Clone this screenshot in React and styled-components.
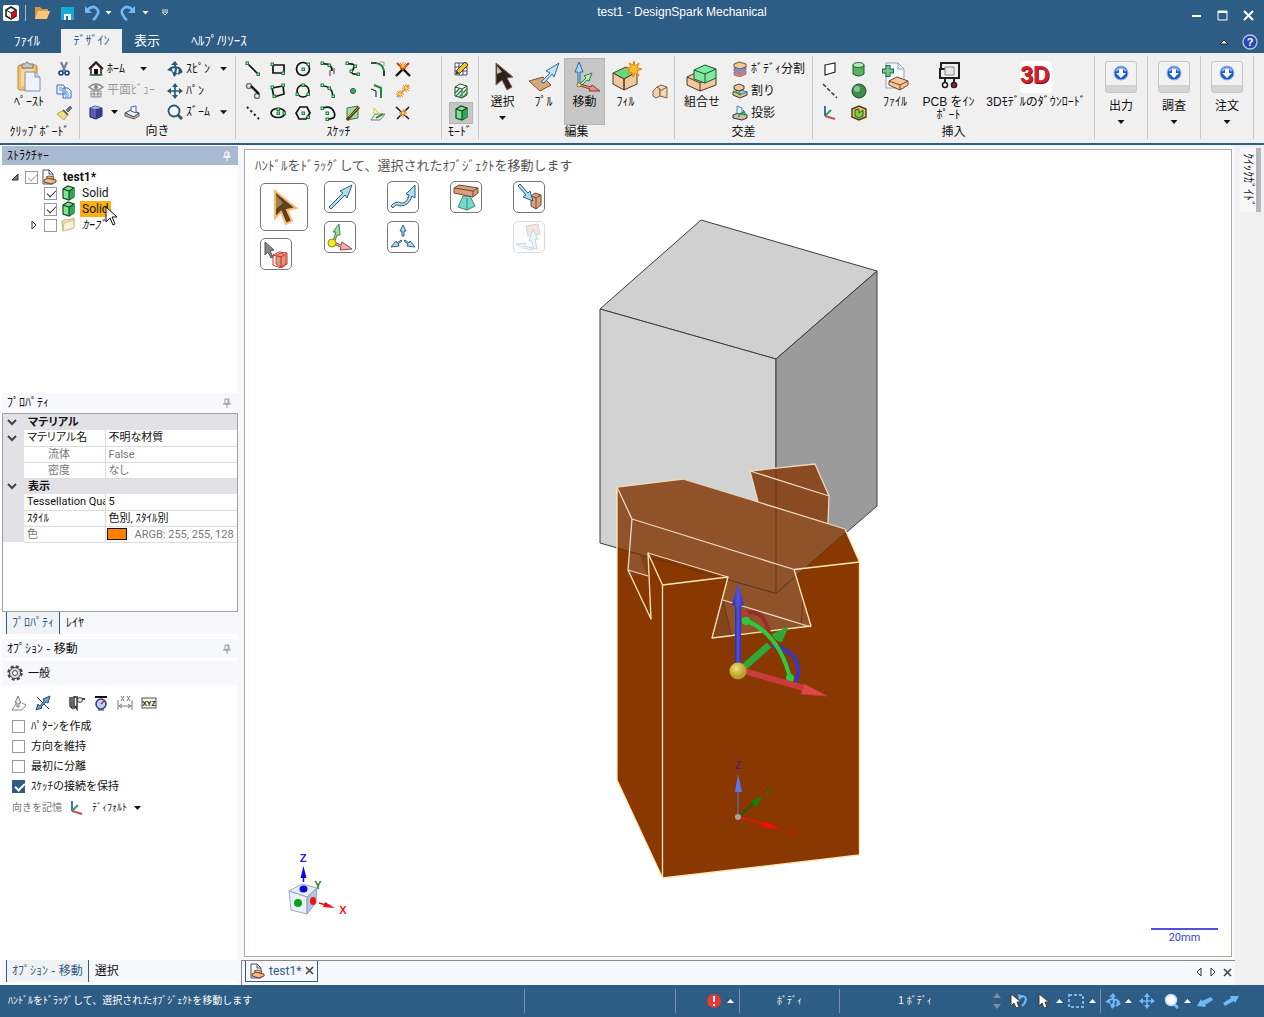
import React from "react";
import styled, { createGlobalStyle, css } from "styled-components";

const blue = "#2d5c85";
const node = "#15803d";

export default function App() {
  return (
    <>
      <GlobalStyle />
      <Window>
        <TitleBar />
        <TabBar />
        <Ribbon />
        <Body>
          <SidePane />
          <WorkArea />
          <QuickGuide>
            <GuideTab type="button">ｸｲｯｸｶﾞｲﾄﾞ</GuideTab>
          </QuickGuide>
        </Body>
        <StatusBar />
      </Window>
    </>
  );
}

/* ---------- title bar and tabs ---------- */

function TitleBar() {
  return (
    <TitleRow>
      <QuickTools>
        <Ico w={18} h={18} box="0 0 18 18">
          <rect x="1" y="1" width="16" height="16" rx="2" fill="#fff" />
          <path d="M4 6l5-3 5 3v6l-5 3-5-3z" fill="#fff" stroke="#222" strokeWidth="1.6" />
          <path d="M9 9l5-3v6l-5 3z" fill="#d0101c" />
          <path d="M4 6l5 3 5-3" fill="none" stroke="#222" />
        </Ico>
        <TitleSep />
        <IconButton aria-label="開く" $w={24}>
          <Ico>
            <path d="M1 14V2h5l2 2h6v3" fill="#d99b3a" />
            <path d="M1 14l3-8h12l-3 8z" fill="#f8c878" />
          </Ico>
        </IconButton>
        <IconButton aria-label="保存" $w={26}>
          <Ico>
            <path d="M2 2h13v13H2z" fill="#18a8d8" />
            <path d="M5 9h7v6H5z" fill="#fff" />
            <path d="M7 11h2v4H7z" fill="#2d6c95" />
          </Ico>
        </IconButton>
        <IconButton aria-label="元に戻す" $w={24}>
          <Undo />
        </IconButton>
        <TitleCaret $color="#fff" />
        <IconButton aria-label="やり直し" $w={26}>
          <Flip>
            <Undo />
          </Flip>
        </IconButton>
        <TitleCaret $color="#fff" />
        <MoreButton aria-label="カスタマイズ">
          <Ico w={8} h={8} box="0 0 8 8">
            <path d="M1 1h6M1 3l3 3 3-3z" stroke="#dde6ee" fill="none" />
          </Ico>
        </MoreButton>
      </QuickTools>
      <Title>test1 - DesignSpark Mechanical</Title>
      <WindowButtons>
        <IconButton aria-label="最小化" $w={26}>
          <Ico><path d="M4 9h9" stroke="#fff" strokeWidth="2" /></Ico>
        </IconButton>
        <IconButton aria-label="最大化" $w={26}>
          <Ico>
            <path d="M4 4h9v9H4z" fill="none" stroke="#fff" />
            <path d="M4 5h9" stroke="#fff" strokeWidth="2" />
          </Ico>
        </IconButton>
        <IconButton aria-label="閉じる" $w={26}>
          <Ico><path d="M4 4l9 9M13 4l-9 9" stroke="#fff" strokeWidth="2" /></Ico>
        </IconButton>
      </WindowButtons>
    </TitleRow>
  );
}

function TabBar() {
  return (
    <TabRow>
      <Tab $w={54}>ﾌｧｲﾙ</Tab>
      <Tab $w={61} $active>ﾃﾞｻﾞｲﾝ</Tab>
      <Tab $w={50}>表示</Tab>
      <Tab $w={94}>ﾍﾙﾌﾟ/ﾘｿｰｽ</Tab>
      <TabSpacer />
      <IconButton aria-label="リボンを折りたたむ" $w={24}>
        <Ico w={10} h={8} box="0 0 10 8">
          <path d="M1 6l4-4 4 4z" fill="#fff" stroke="#222" strokeWidth="1" />
        </Ico>
      </IconButton>
      <IconButton aria-label="ヘルプ" $w={28}>
        <Ico>
          <circle cx="8" cy="8" r="7" fill="#2848b0" stroke="#b8c4e0" strokeWidth="1.4" />
          <text x="8" y="12" textAnchor="middle" fontSize="11" fontWeight="700" fill="#fff">?</text>
        </Ico>
      </IconButton>
    </TabRow>
  );
}

/* ---------- ribbon ---------- */

function Ribbon() {
  return (
    <RibbonRow>
      <Group $w={80} $label="ｸﾘｯﾌﾟﾎﾞｰﾄﾞ">
        <BigButton $w={48} $left={5}>
          <PasteIcon />
          ﾍﾟｰｽﾄ
        </BigButton>
        <IconColumn $left={3}>
          <IconButton aria-label="切り取り">
            <Ico>
              <path d="M5 1l4 9M11 1L7 10" stroke="#6880a8" strokeWidth="2" />
              <circle cx="5" cy="12" r="2" fill="none" stroke="#183c80" strokeWidth="1.6" />
              <circle cx="11" cy="12" r="2" fill="none" stroke="#183c80" strokeWidth="1.6" />
            </Ico>
          </IconButton>
          <IconButton aria-label="コピー">
            <Ico>
              <path d="M1 2h6l2 2v7H1zM7 5h5l3 3v7H7z" fill="#e8f2ff" stroke="#3c70c0" />
              <path d="M3 5h3M3 7h3M9 9h3M9 11h4M9 13h4" stroke="#5c90d8" />
            </Ico>
          </IconButton>
          <IconButton aria-label="書式のコピー">
            <Ico>
              <path d="M10 5l4-4 2 2-4 4z" fill="#6878a8" stroke="#344" strokeWidth=".6" />
              <path d="M1 9l7-4 4 4-4 6z" fill="#f0e080" stroke="#a89030" strokeWidth=".8" />
              <path d="M7 5l5 5" stroke="#555" strokeWidth="1.5" />
            </Ico>
          </IconButton>
        </IconColumn>
      </Group>

      <Group $w={156} $label="向き">
        <IconColumn $left={8} $w={75}>
          <SmallButton $pad={16}>
            <Ico>
              <path d="M3 7v7h10V7L8 2z" fill="#fff" stroke="#18184c" strokeWidth="1.5" />
              <path d="M1 8l7-7 7 7" fill="none" stroke="#402010" strokeWidth="1.8" />
              <path d="M6 8h4v6H6z" fill="#111" />
              <path d="M1 14h14" stroke="#60a030" />
            </Ico>
            <span>ﾎｰﾑ</span>
            <Caret $push />
          </SmallButton>
          <SmallButton disabled>
            <Ico>
              <path d="M1 5q7-6 14 0q-7 6-14 0z" fill="none" stroke="#888" strokeWidth="1.5" />
              <circle cx="8" cy="5" r="2" fill="#888" />
              <path d="M3 9h10v6H3zM3 12h10M6 9v6M10 9v6" fill="none" stroke="#888" />
            </Ico>
            <span>平面ﾋﾞｭｰ</span>
          </SmallButton>
          <ButtonPair>
            <CubeButton aria-label="ビュー">
              <Ico>
                <path d="M2 4l5-2 7 2v8l-6 3-6-2z" fill="#5560b8" stroke="#18205c" />
                <path d="M2 4l6 1 6-1-7-2z" fill="#a8b0f0" />
                <path d="M8 5v10l6-3V4z" fill="#303c90" />
              </Ico>
              <Caret />
            </CubeButton>
            <IconButton aria-label="スケッチ平面">
              <Ico>
                <path d="M1 9l6-3 8 3-5 4z" fill="#e8f0f8" stroke="#345" />
                <path d="M1 9v3l9 3 5-3V9l-5 4z" fill="#e0b090" stroke="#345" strokeWidth=".8" />
                <path d="M7 3l5-1v7l-5-2z" fill="#f4f8ff" stroke="#3868b0" />
              </Ico>
            </IconButton>
          </ButtonPair>
        </IconColumn>
        <IconColumn $left={4} $w={64}>
          <SmallButton><SpinIcon color="#285878" /><span>ｽﾋﾟﾝ</span><Caret $push /></SmallButton>
          <SmallButton><PanIcon color="#285878" /><span>ﾊﾟﾝ</span></SmallButton>
          <SmallButton>
            <Ico>
              <circle cx="7" cy="7" r="5.5" fill="#eef6fb" stroke="#285878" strokeWidth="1.8" />
              <path d="M11 11l4 4" stroke="#285878" strokeWidth="3" />
            </Ico>
            <span>ｽﾞｰﾑ</span>
            <Caret $push />
          </SmallButton>
        </IconColumn>
      </Group>

      <Group $w={206} $label="ｽｹｯﾁ">
        <SketchGrid>
          {sketchTools.map(([name, drawing]) => (
            <IconButton key={name} aria-label={name}>
              <Ico>{drawing}</Ico>
            </IconButton>
          ))}
        </SketchGrid>
      </Group>

      <Group $w={37} $label="ﾓｰﾄﾞ">
        <IconColumn $left={7}>
          <IconButton aria-label="スケッチモード" $w={24}>
            <Ico>
              <path d="M2 2h12v12H2zM2 6h12M2 10h12M6 2v12M10 2v12" fill="#fff" stroke="#444c78" />
              <Pencil />
            </Ico>
          </IconButton>
          <IconButton aria-label="断面モード" $w={24}>
            <Ico>
              <path d="M2 4l5-3 7 2v9l-5 3-7-2z" fill="#fff" stroke="#184c28" />
              <path d="M2 4l7 2 5-3M9 6v9" fill="none" stroke="#184c28" />
              <path d="M2 10l5-5M3 13l6-6M6 14l3-3M10 10l4-4M10 14l4-4" stroke="#208840" strokeWidth="1.4" />
            </Ico>
          </IconButton>
          <IconButton aria-label="3Dモード" $w={24} $active><SolidIcon /></IconButton>
        </IconColumn>
      </Group>

      <Group $w={196} $label="編集">
        <BigButton $w={41} $left={3}>
          <Ico w={32} h={32} box="0 0 32 32">
            <path d="M9 2v22l6-5 5 10 5-3-5-9 6-1z" fill="#30201a" stroke="#806858" />
            <path d="M10 5v8l5-2z" fill="#c8c0bc" />
          </Ico>
          選択
          <Caret />
        </BigButton>
        <BigButton $w={41}>
          <Ico w={32} h={32} box="0 0 32 32">
            <path d="M1 20l14-4 8 8-11 6z" fill="#d8a878" stroke="#785030" />
            <path d="M13 21l9-9-4-2 13-8-5 14-2-3-8 9z" fill="#c0e4f8" stroke="#306890" />
          </Ico>
          ﾌﾟﾙ
        </BigButton>
        <BigButton $w={41} $active>
          <Ico w={32} h={32} box="0 0 32 32">
            <path d="M9 24V11H6l4-10 4 10h-3v13z" fill="#a8d8f0" stroke="#306890" />
            <path d="M11 23l6-6-2-2 8-3-3 8-2-1-6 6z" fill="#b8e8b8" stroke="#308040" />
            <path d="M11 23l11 3 1-2 8 6-11 0 1-2-10-3z" fill="#e89090" stroke="#903838" />
            <circle cx="10" cy="24" r="2" fill="#f8f080" stroke="#807820" />
          </Ico>
          移動
        </BigButton>
        <BigButton $w={41}>
          <Ico w={32} h={32} box="0 0 32 32">
            <path d="M3 12l13-6 11 5-13 7z" fill="#68d880" stroke="#404020" />
            <path d="M3 12v11l11 6V18zM14 18v11l13-6V11z" fill="#f0c8a0" stroke="#50381c" />
            <path d="M24 0l1 5 4-3-2 5 5 1-5 2 2 5-4-3-2 4-1-5-5 2 3-4-4-2 5-1-2-4 4 2z" fill="#ffc030" stroke="#e08010" />
          </Ico>
          ﾌｨﾙ
        </BigButton>
        <Centered $left={3}>
          <IconButton aria-label="オフセット" $w={22}>
            <Ico>
              <path d="M1 8l4-4 3 1v8l-4 2-3-2z" fill="#f0d0b0" stroke="#806040" />
              <path d="M5 4l4-2 6 2v11l-7-2V6z" fill="#f4d4b4" stroke="#806040" />
              <path d="M8 8l7-4" stroke="#806040" />
            </Ico>
          </IconButton>
        </Centered>
      </Group>

      <Group $w={138} $label="交差">
        <BigButton $w={46} $left={4}>
          <Ico w={32} h={32} box="0 0 32 32">
            <path d="M1 16l8-4 21 5v7l-16 6-13-6z" fill="#f0c8a0" stroke="#50381c" />
            <path d="M1 16l13 6v8M14 22l4-2" fill="none" stroke="#50381c" />
            <path d="M8 9l11-5 11 4v9l-11 5-11-4z" fill="#80e8a0" stroke="#145c28" />
            <path d="M8 9l11 4 11-5M19 13v9" fill="none" stroke="#145c28" />
          </Ico>
          組合せ
        </BigButton>
        <IconColumn $left={7} $w={76}>
          <SmallButton>
            <Ico>
              <path d="M2 7l6 2 6-3v3l-6 3-6-2z" fill="#8890d8" stroke="#505890" strokeWidth=".6" />
              <path d="M2 11l6 2 6-3v3l-6 3-6-2z" fill="#e08080" stroke="#904040" strokeWidth=".6" />
              <path d="M2 3l5-2 7 2v3l-6 2-6-2z" fill="#f0c8a0" stroke="#705030" />
            </Ico>
            <span>ﾎﾞﾃﾞｨ分割</span>
          </SmallButton>
          <SmallButton>
            <Ico>
              <path d="M1 9l6-2 8 2v3l-7 3-7-3z" fill="#e8c098" stroke="#50381c" />
              <path d="M9 7l6 2-4 2-5-1z" fill="#90c8e8" stroke="#3070a0" strokeWidth=".8" />
              <path d="M2 3l5-2 5 2v3l-5 2-5-2z" fill="#f0c8a0" stroke="#50381c" />
              <path d="M1 8l6 3 2 1" stroke="#30a040" fill="none" strokeWidth="1.6" />
            </Ico>
            <span>割り</span>
          </SmallButton>
          <SmallButton>
            <Ico>
              <path d="M1 10l5-2 9 2v3l-5 2-9-2z" fill="#e0b890" stroke="#203060" />
              <path d="M5 1l5 2v7L5 8z" fill="#d8f0ff" stroke="#4888c0" />
              <path d="M7 12V9l6-2M11 5l3 5" stroke="#209838" fill="none" strokeWidth="1.4" />
            </Ico>
            <span>投影</span>
          </SmallButton>
        </IconColumn>
      </Group>

      <Group $w={282} $label="挿入">
        <InsertGrid>
          <IconButton aria-label="平面">
            <Ico><path d="M3 4l10-2v9L3 14z" fill="#fff" stroke="#222" strokeWidth="1.2" /></Ico>
          </IconButton>
          <IconButton aria-label="円柱">
            <Ico>
              <path d="M2 4v9q6 4 11 0V4z" fill="#58b068" stroke="#185c28" />
              <ellipse cx="7.5" cy="4" rx="5.500" ry="2.5" fill="#b8e8b8" stroke="#185c28" />
            </Ico>
          </IconButton>
          <IconButton aria-label="軸">
            <Ico><path d="M1 1l14 14" stroke="#333" strokeWidth="1.4" strokeDasharray="4 2" /></Ico>
          </IconButton>
          <IconButton aria-label="球">
            <Ico>
              <circle cx="8" cy="8" r="7" fill="#3c8c4c" stroke="#1c4c24" />
              <circle cx="6" cy="6" r="3" fill="#80c890" />
            </Ico>
          </IconButton>
          <IconButton aria-label="原点"><OriginIcon /></IconButton>
          <IconButton aria-label="シェル">
            <Ico>
              <path d="M1 4l7-3 7 3v8l-7 3-7-3z" fill="#e8c080" stroke="#503810" strokeWidth="1.4" />
              <path d="M4 5l4-1v4l4-3v6l-4 2-4-2z" fill="#78d040" stroke="#286010" />
            </Ico>
          </IconButton>
        </InsertGrid>
        <BigButton $w={40}>
          <Ico w={32} h={32} box="0 0 32 32">
            <path d="M7 2h12l6 6v19H7z" fill="#f4f8fc" stroke="#90a4b8" />
            <path d="M19 2v6h6" fill="none" stroke="#90a4b8" />
            <path d="M9 4v12M3 10h12" stroke="#206840" strokeWidth="5" />
            <path d="M9 5v10M4 10h10" stroke="#70c890" strokeWidth="3" />
            <path d="M10 20l8-4 11 4v4l-8 5-11-5z" fill="#f8c898" stroke="#704820" />
            <path d="M10 20l11 4 8-4M21 24v5" fill="none" stroke="#704820" />
          </Ico>
          ﾌｧｲﾙ
        </BigButton>
        <BigButton $w={67}>
          <Ico w={32} h={32} box="0 0 32 32">
            <path d="M8 8V2h18v15H7V8h5" fill="none" stroke="#222" strokeWidth="2" />
            <path d="M12 17v5M21 17v5" fill="none" stroke="#222" strokeWidth="2" />
            <path d="M12 6h9v8h-9z" fill="#e8e8e8" stroke="#888" />
            <circle cx="12" cy="24" r="2.500" fill="#fff" stroke="#222" strokeWidth="1.600" />
            <circle cx="21" cy="24" r="2.500" fill="#c01828" stroke="#222" strokeWidth="1.600" />
          </Ico>
          PCB をｲﾝ<br />ﾎﾟｰﾄ
        </BigButton>
        <BigButton $w={108}>
          <Ico w={32} h={32} box="0 0 32 32">
            <rect width="32" height="32" rx="4" fill="#fff" />
            <text x="16" y="23" textAnchor="middle" fontSize="23" fontWeight="700" fill="#701018">3D</text>
            <text x="15" y="22" textAnchor="middle" fontSize="23" fontWeight="700" fill="#d8202c">3D</text>
          </Ico>
          3Dﾓﾃﾞﾙのﾀﾞｳﾝﾛｰﾄﾞ
        </BigButton>
      </Group>

      {["出力", "調査", "注文"].map((name) => (
        <Group key={name} $w={53}>
          <BigButton $w={52}>
            <Tile>
              <Ico>
                <circle cx="8" cy="8" r="7" fill="#1c58d0" stroke="#9cb4e4" />
                <path d="M3 6q5-6 10 0" stroke="#88b4f8" fill="none" strokeWidth="2" />
                <path d="M6 4h4v4h3l-5 5-5-5h3z" fill="#fff" />
              </Ico>
            </Tile>
            <TileText>{name}</TileText>
            <Caret />
          </BigButton>
        </Group>
      ))}
    </RibbonRow>
  );
}

function Group({ $w, $label, children }) {
  return (
    <GroupBox $w={$w}>
      <GroupTools>{children}</GroupTools>
      {$label && <GroupLabel>{$label}</GroupLabel>}
    </GroupBox>
  );
}

/* ---------- icons ---------- */

function Ico({ w = 16, h = 16, box = "0 0 16 16", children }) {
  return (
    <Svg width={w} height={h} viewBox={box} aria-hidden="true">
      {children}
    </Svg>
  );
}

function Undo() {
  return (
    <Ico>
      <path d="M1 1v7h7z" fill="#70b8f8" />
      <path d="M3 5q5-5 9-2t1 7q-1 3-4 5" fill="none" stroke="#70b8f8" strokeWidth="2.5" />
    </Ico>
  );
}

function PasteIcon() {
  return (
    <Ico w={32} h={32} box="0 0 32 32">
      <rect x="5" y="4" width="19" height="25" rx="2" fill="#f0c070" stroke="#b88830" />
      <path d="M8 8h13v17H8z" fill="#f8d898" />
      <path d="M9 3h3q2-4 4 0h4v4H9z" fill="#c8c8c8" stroke="#777" />
      <path d="M12 11h10l5 5v14H12z" fill="#eef3fa" stroke="#8090a8" />
      <path d="M22 11v5h5" fill="#d0d8e8" stroke="#8090a8" />
    </Ico>
  );
}

function SpinIcon({ color }) {
  return (
    <Ico>
      <path d="M3 9q1-3 5-3 6 1 6 4M7 3q4 5 0 10" fill="none" stroke={color} strokeWidth="2" />
      <path d="M4 4l4-4 3 4zM5 11l2 5 4-4zM0 9l4-3 2 5zM12 7l4 4-5 3z" fill={color} />
    </Ico>
  );
}

function PanIcon({ color }) {
  return (
    <Ico>
      <path d="M8 2v12M2 8h12" stroke={color} strokeWidth="1.6" />
      <path d="M5 4l3-4 3 4zM5 12l3 4 3-4zM4 5L0 8l4 3zM12 5l4 3-4 3z" fill={color} />
    </Ico>
  );
}

function SolidIcon() {
  return (
    <Ico>
      <path d="M3 4l5-3 6 2v9l-5 3-6-2z" fill="#80e098" stroke="#104c20" strokeWidth="1.2" />
      <path d="M9 6l5-3v9l-5 3z" fill="#30a850" />
      <path d="M3 4l6 2 5-3M9 6v9" fill="none" stroke="#104c20" strokeWidth="1.2" />
    </Ico>
  );
}

function OriginIcon() {
  return (
    <Ico>
      <path d="M3 1v10" stroke="#3870b0" strokeWidth="2" />
      <path d="M3 11l6-6" stroke="#30a060" strokeWidth="2" />
      <path d="M3 11l10 3" stroke="#c05050" strokeWidth="2" />
    </Ico>
  );
}

function DocIcon() {
  return (
    <Ico>
      <path d="M2 1h6l4 4v10H2z" fill="#f4f8fc" stroke="#445468" />
      <path d="M8 1v4h4" fill="none" stroke="#445468" />
      <path d="M3 11l4-2 8 2v2l-5 2-7-2z" fill="#f0b880" stroke="#704020" />
      <path d="M5 8l3-1 5 1-1 2-6-1z" fill="#f0b880" stroke="#704020" strokeWidth=".8" />
    </Ico>
  );
}

function Pencil() {
  return (
    <>
      <path d="M3 13l1-4 8-8 3 3-8 8z" fill="#e8c830" stroke="#584010" />
      <path d="M3 13l1-3 2 2z" fill="#333" />
    </>
  );
}

function PinIcon({ color }) {
  return (
    <Ico w={10} h={10} box="0 0 10 10">
      <path d="M3 1h4v5H3zM1 6h8M5 6v4M6 1v5" fill="none" stroke={color} />
    </Ico>
  );
}

function Nodes({ at }) {
  return at.map(([x, y]) => (
    <rect key={`${x}-${y}`} x={x} y={y} width="2.500" height="2.500" fill="#b8e8c8" stroke={node} />
  ));
}

function Burst({ x, y }) {
  return (
    <>
      <path d={`M${x - 4} ${y}h8M${x} ${y - 4}v8M${x - 3} ${y - 3}l6 6M${x + 3} ${y - 3}l-6 6`} stroke="#f07818" />
      <circle cx={x} cy={y} r="1.5" fill="#ffd820" />
    </>
  );
}

const ink = { fill: "none", stroke: "#111", strokeWidth: 1.7 };
const faint = { fill: "none", stroke: "#777", strokeWidth: 1.5 };
const green = { fill: "none", stroke: "#208838", strokeWidth: 2 };

const sketchTools = [
  ["線", <><path d="M3 3l10 10" {...ink} /><Nodes at={[[1, 1], [12, 12]]} /></>],
  ["長方形", <><path d="M3 4h11v8H3z" {...ink} /><Nodes at={[[1, 2], [12, 11]]} /></>],
  ["円", <><circle cx="8" cy="8" r="6.5" {...ink} /><Nodes at={[[7, 7], [12, 2]]} /></>],
  ["接線円弧", <><path d="M3 3q9-1 9 7" {...ink} /><path d="M10 9v6M14 7v6" {...faint} /><Nodes at={[[1, 1], [8, 3]]} /></>],
  ["スプライン", <><path d="M3 3q7-1 6 3t-3 5q2 3 7 2" {...ink} /><Nodes at={[[1, 1], [9, 4], [5, 9], [12, 12]]} /></>],
  ["丸いコーナー", <><path d="M1 2h5M14 10v5" {...ink} /><path d="M6 2q7 1 8 8" {...green} /><path d="M10 1h4v4" stroke="#c88" fill="none" /></>],
  ["トリム", <><path d="M1 15l7-7 7 7" {...ink} strokeWidth="2.4" /><path d="M2 2l6 6 6-6" stroke="#c83818" strokeWidth="2" fill="none" /><Burst x={8} y={5} /></>],
  ["接線", <><circle cx="4" cy="3" r="2.5" {...faint} /><circle cx="12" cy="13" r="2.5" {...faint} /><path d="M6 3l8 8" {...ink} strokeWidth="2.4" /></>],
  ["3点長方形", <><path d="M2 5l11-2 1 8-10 3z" {...ink} /><Nodes at={[[1, 3], [12, 1], [3, 12]]} /></>],
  ["3点円", <><circle cx="8" cy="8" r="6" {...ink} /><Nodes at={[[7, 1], [1, 10], [12, 10]]} /></>],
  ["3点円弧", <><path d="M3 3q9 0 10 10" {...ink} /><Nodes at={[[1, 1], [8, 4], [12, 12]]} /></>],
  ["点", <circle cx="8" cy="8" r="2.5" fill="#48a860" stroke="#186030" />],
  ["オフセット", <><path d="M1 6l5 2v6" {...ink} strokeWidth="1" /><path d="M4 2l7 3v10" {...green} /></>],
  ["分割", <><path d="M2 14L14 2" {...faint} /><Burst x={11} y={5} /><Burst x={5} y={11} /></>],
  ["構築線", <path d="M2 2l13 13" stroke="#111" strokeWidth="2" strokeDasharray="2 3" />],
  ["楕円", <><ellipse cx="8" cy="8" rx="7" ry="4.5" {...ink} /><Nodes at={[[7, 7], [7, 3], [13, 7]]} /></>],
  ["多角形", <><path d="M5 2h7l3 6-4 6H4L1 8z" {...ink} /><Nodes at={[[7, 7], [12, 11]]} /></>],
  ["スイープ円弧", <><path d="M3 3q8-3 11 4t-6 7" {...ink} /><Nodes at={[[1, 2], [6, 7], [6, 13]]} /></>],
  ["面の曲線", <><path d="M2 3l11-2v12L2 15z" fill="#a8d8a8" stroke="#408048" /><path d="M2 15L14 2" stroke="#584010" strokeWidth="3" /><path d="M4 12L14 2" stroke="#b89850" /></>],
  ["投影線", <><path d="M1 15l4-6h10l-5 6z" fill="#e0f4e0" stroke="#777" /><path d="M4 3l7 8M4 3v7" stroke="#d8d020" fill="none" /><path d="M6 13l7-4" {...green} /></>],
  ["コーナー作成", <><path d="M1 2l13 12M2 14L14 2" {...ink} strokeWidth="1.5" /><Burst x={8} y={8} /></>],
];

/* ---------- left side ---------- */

function SidePane() {
  return (
    <Side>
      <PaneHead $active>
        ｽﾄﾗｸﾁｬｰ
        <PinIcon color="#fff" />
      </PaneHead>
      <Tree>
        <TreeRow>
          <Twist aria-label="折りたたむ">
            <Ico w={8} h={8} box="0 0 8 8"><path d="M7 1v6H1z" fill="#777" stroke="#333" /></Ico>
          </Twist>
          <Check id="doc" type="checkbox" defaultChecked $tick="#aaa" />
          <DocIcon />
          <TreeLabel htmlFor="doc" $bold>test1*</TreeLabel>
        </TreeRow>
        <TreeRow $indent>
          <Check id="solid1" type="checkbox" defaultChecked />
          <SolidIcon />
          <TreeLabel htmlFor="solid1">Solid</TreeLabel>
        </TreeRow>
        <TreeRow $indent>
          <Check id="solid2" type="checkbox" defaultChecked />
          <SolidIcon />
          <TreeLabel htmlFor="solid2" $selected>
            Solid
            <Pointer>
              <Ico w={14} h={20} box="0 0 14 20">
                <path d="M1 1v15l4-4 3 7 2-1-3-7h5z" fill="#fff" stroke="#111" />
              </Ico>
            </Pointer>
          </TreeLabel>
        </TreeRow>
        <TreeRow $twisted>
          <Twist aria-label="展開する">
            <Ico w={8} h={8} box="0 0 8 8"><path d="M2 0l4 4-4 4z" fill="#fff" stroke="#333" /></Ico>
          </Twist>
          <Check id="curves" type="checkbox" />
          <Ico>
            <path d="M2 4l5-2 1 1 6-2v10L3 14z" fill="#f0e4b8" stroke="#c8b478" />
            <path d="M4 6l10-3v8L3 14z" fill="#f8f0d0" stroke="#d0c090" />
          </Ico>
          <TreeLabel htmlFor="curves" $italic>ｶｰﾌﾞ</TreeLabel>
        </TreeRow>
      </Tree>

      <PaneHead>
        ﾌﾟﾛﾊﾟﾃｨ
        <PinIcon color="#999" />
      </PaneHead>
      <PropertyBox>
        <PropertyTable>
          <colgroup><col width="21" /><col width="81" /><col /></colgroup>
          <tbody>
            <PropSection title="マテリアル" />
            <PropRow open name="マテリアル名" value="不明な材質" />
            <PropRow dim indent name="流体" value="False" />
            <PropRow dim indent name="密度" value="なし" />
            <PropSection title="表示" />
            <PropRow name="Tessellation Qua" value="5" />
            <PropRow name="ｽﾀｲﾙ" value="色別, ｽﾀｲﾙ別" />
            <PropRow dim name="色" value={<><Swatch />ARGB: 255, 255, 128</>} />
          </tbody>
        </PropertyTable>
      </PropertyBox>
      <PaneTabs>
        <PaneTab $active>ﾌﾟﾛﾊﾟﾃｨ</PaneTab>
        <PaneTab>ﾚｲﾔ</PaneTab>
      </PaneTabs>

      <Options>
        <PaneHead>
          ｵﾌﾟｼｮﾝ - 移動
          <PinIcon color="#999" />
        </PaneHead>
        <SectionHead>
          <Ico>
            <circle cx="8" cy="8" r="6.5" fill="none" stroke="#444" strokeWidth="2.5" strokeDasharray="3 2.100" />
            <circle cx="8" cy="8" r="5.500" fill="#ddd" stroke="#444" />
            <circle cx="8" cy="8" r="2.5" fill="#fff" stroke="#444" />
          </Ico>
          一般
        </SectionHead>
        <OptionIcons>
          <IconButton aria-label="方向" $w={24}>
            <Ico>
              <path d="M5 9l-4 6h10l4-5-4-2" fill="none" stroke="#888" />
              <path d="M7 1l3 7H8v4H6V8H4z" fill="#eee" stroke="#777" />
            </Ico>
          </IconButton>
          <IconButton aria-label="方向の反転" $w={24}>
            <Ico>
              <path d="M2 2l12 12" stroke="#333" />
              <path d="M1 15l2-6 2 2 4-5-1-2 7-3-2 7-2-1-5 5 1 1z" fill="#70a0c8" stroke="#244c70" />
            </Ico>
          </IconButton>
          <OptionGap />
          <IconButton aria-label="計測" $w={24}>
            <Ico>
              <path d="M1 2v9l2 2V2M5 1v13M5 2h4M8 2v12l-2-3" fill="none" stroke="#333" strokeWidth="1.5" />
              <circle cx="11" cy="5" r="2.5" fill="#d8e4f4" stroke="#445" />
              <path d="M13 4h3" stroke="#445" strokeWidth="2" />
            </Ico>
          </IconButton>
          <IconButton aria-label="ダイヤル" $w={24}>
            <Ico>
              <path d="M2 2h12" stroke="#111" strokeWidth="2" />
              <circle cx="8" cy="9" r="5" fill="#b8d4f8" stroke="#303c78" strokeWidth="1.5" />
              <path d="M8 9l3-3" stroke="#c02030" strokeWidth="1.5" />
              <path d="M5 15h6" stroke="#333" />
            </Ico>
          </IconButton>
          <IconButton aria-label="ルーラー" $w={24}>
            <Ico>
              <path d="M1 5v10M15 5v10M2 11h12M5 9l-3 2 3 2M11 9l3 2-3 2M4 1l3 5M7 1L4 6M10 1l3 5M13 1l-3 5" fill="none" stroke="#777" />
            </Ico>
          </IconButton>
          <IconButton aria-label="座標" $w={24}>
            <Ico>
              <rect x="1" y="3" width="14" height="10" fill="#f4f4d8" stroke="#555" />
              <text x="8" y="11" textAnchor="middle" fontSize="7" fontWeight="700" fill="#222">XYZ</text>
            </Ico>
          </IconButton>
        </OptionIcons>
        <OptionRow><Check id="o1" type="checkbox" /><label htmlFor="o1">ﾊﾟﾀｰﾝを作成</label></OptionRow>
        <OptionRow><Check id="o2" type="checkbox" /><label htmlFor="o2">方向を維持</label></OptionRow>
        <OptionRow><Check id="o3" type="checkbox" /><label htmlFor="o3">最初に分離</label></OptionRow>
        <OptionRow><Check id="o4" type="checkbox" defaultChecked $filled /><label htmlFor="o4">ｽｹｯﾁの接続を保持</label></OptionRow>
        <MemoryRow>
          <label htmlFor="orient">向きを記憶</label>
          <OriginIcon />
          <Select id="orient" defaultValue="default"><option value="default">ﾃﾞｨﾌｫﾙﾄ</option></Select>
          <Caret />
        </MemoryRow>
      </Options>
      <PaneTabs>
        <PaneTab $active>ｵﾌﾟｼｮﾝ - 移動</PaneTab>
        <PaneTab>選択</PaneTab>
      </PaneTabs>
    </Side>
  );
}

function Chevron() {
  return (
    <Ico w={10} h={8} box="0 0 10 8">
      <path d="M1 2l4 4 4-4" fill="none" stroke="#444" strokeWidth="2" />
    </Ico>
  );
}

function PropSection({ title }) {
  return (
    <tr>
      <Gutter><Chevron /></Gutter>
      <SectionCell colSpan={2}>{title}</SectionCell>
    </tr>
  );
}

function PropRow({ open, dim, indent, name, value }) {
  return (
    <tr>
      <Gutter>{open && <Chevron />}</Gutter>
      <PropCell $dim={dim} $indent={indent}>{name}</PropCell>
      <PropCell $dim={dim}>{value}</PropCell>
    </tr>
  );
}

/* ---------- 3D view ---------- */

function WorkArea() {
  return (
    <Work>
      <Viewport>
        <Scene />
        <Hint>ﾊﾝﾄﾞﾙをﾄﾞﾗｯｸﾞして、選択されたｵﾌﾞｼﾞｪｸﾄを移動します</Hint>
        <Guides>
          <GuideSide>
            <GuideButton $size={48} aria-label="選択">
              <Ico w={38} h={38} box="0 0 38 38">
                <path d="M10 3v27l6-6 5 12 6-3-5-11 9-2z" fill="#5c4420" stroke="#ffb870" strokeWidth="2" />
                <path d="M11 7v14l7-6z" fill="#a08050" />
              </Ico>
            </GuideButton>
            <GuideButton $size={32} aria-label="構成部品を選択">
              <Ico w={28} h={28} box="0 0 28 28">
                <path d="M3 2v13l3-3 3 6 2-1-3-6 4-1z" fill="#888" stroke="#555" />
                <path d="M14 15l5-2 5 2v9l-5 3-5-3z" fill="#d89878" stroke="#a06040" />
                <path d="M11 15l6-3 8 1v11l-6 4-8-3zM11 15l8 2 6-4M19 17v11" fill="none" stroke="#e02020" />
              </Ico>
            </GuideButton>
          </GuideSide>
          <GuideGrid>
            <GuideButton $size={32} aria-label="移動方向">
              <Ico w={28} h={28} box="0 0 28 28">
                <path d="M3 24l14-14-3-2 12-6-5 13-2-3L5 26z" fill="#b0dcf0" stroke="#306080" />
              </Ico>
            </GuideButton>
            <GuideButton $size={32} aria-label="軌跡に沿って移動">
              <Ico w={28} h={28} box="0 0 28 28">
                <path d="M2 23q5-6 10-3 6 1 8-8l-3-1 9-9v13l-3-2q-3 10-12 10-4-3-7 2z" fill="#b0dcf0" stroke="#306080" />
              </Ico>
            </GuideButton>
            <GuideButton $size={32} aria-label="支点">
              <Ico w={28} h={28} box="0 0 28 28">
                <path d="M11 13h7l5 10-8 4-9-3z" fill="#78d8c8" stroke="#388878" />
                <path d="M15 15v12" stroke="#388878" />
                <path d="M2 5l5-3 19 3v5l-5 4L2 10z" fill="#d8a080" stroke="#704830" />
                <path d="M2 5l19 3 5-3M21 8v6" stroke="#704830" fill="none" />
              </Ico>
            </GuideButton>
            <GuideButton $size={32} aria-label="指定先">
              <Ico w={28} h={28} box="0 0 28 28">
                <path d="M16 13l4-3 6 2v10l-5 4-5-3z" fill="#d8a080" stroke="#704830" />
                <path d="M16 13l5 2 5-3M21 15v11" fill="none" stroke="#704830" />
                <path d="M3 3l2-2 8 9 2-2 3 10-10-4 3-2z" fill="#a8d8f0" stroke="#306080" />
              </Ico>
            </GuideButton>
            <GuideButton $size={32} aria-label="アンカー">
              <Ico w={28} h={28} box="0 0 28 28">
                <path d="M7 18l3-9H7l6-8 1 11h-3l-3 8z" fill="#a8e0a8" stroke="#388048" />
                <path d="M8 19l7 3 1-3 10 7-12 1 1-3-8-3z" fill="#f0b0a8" stroke="#904840" />
                <circle cx="6" cy="20" r="4" fill="#f0e820" stroke="#989010" />
              </Ico>
            </GuideButton>
            <GuideButton $size={32} aria-label="放射">
              <Ico w={28} h={28} box="0 0 28 28">
                <path d="M13 13V8h-2l3-6 3 6h-2v5zM12 17l-4 3-1-2-5 6 8-1-1-2 4-3zM16 17l4 3 1-2 5 6-8-1 1-2-4-3z" fill="#b0dcf0" stroke="#306080" />
              </Ico>
            </GuideButton>
            <span />
            <GuideButton $size={32} aria-label="オブジェクトに整列" disabled>
              <Ico w={28} h={28} box="0 0 28 28">
                <path d="M11 3l12-2 2 10-12 2z" fill="#d8a080" stroke="#704830" />
                <path d="M18 6l5 11-3-1 2 10h-3l-3-9-2 1zM1 21l10-1-2 3 9 2-1 2-9-2z" fill="#b0dcf0" stroke="#306080" />
              </Ico>
            </GuideButton>
          </GuideGrid>
        </Guides>
        <ScaleBar>20mm</ScaleBar>
      </Viewport>
      <DocBar>
        <DocTab>
          <DocIcon />
          test1*
          <Ico w={9} h={10} box="0 0 9 10"><path d="M1 1l7 7M8 1L1 8" stroke="#444" strokeWidth="1.6" /></Ico>
        </DocTab>
        <DocNav>
          <IconButton aria-label="前へ" $w={14}>
            <Ico w={8} h={10} box="0 0 8 10"><path d="M6 1v8L2 5z" fill="#fff" stroke="#333" /></Ico>
          </IconButton>
          <IconButton aria-label="次へ" $w={14}>
            <Ico w={8} h={10} box="0 0 8 10"><path d="M2 1v8l4-4z" fill="#fff" stroke="#333" /></Ico>
          </IconButton>
          <IconButton aria-label="閉じる" $w={14}>
            <Ico w={9} h={9} box="0 0 9 9"><path d="M1 1l7 7M8 1L1 8" stroke="#444" strokeWidth="1.6" /></Ico>
          </IconButton>
        </DocNav>
      </DocBar>
    </Work>
  );
}

function Scene() {
  const silhouette = "M600 309L701 220L877 271V506L776 593.5L600 543Z";
  const body = "M617 487L683 479L758 502L845 529L859.5 562L859.5 855L662.5 878L617 780Z";
  return (
    <SceneSvg viewBox="245 150 986 806" preserveAspectRatio="xMinYMin meet" role="img" aria-label="3D">
      <defs>
        <clipPath id="cube"><path d={silhouette} /></clipPath>
        <linearGradient id="blueRod"><stop stopColor="#2c2ca8" /><stop offset=".5" stopColor="#5454e4" /><stop offset="1" stopColor="#3030b0" /></linearGradient>
        <radialGradient id="ball" cx=".4" cy=".35"><stop stopColor="#f0e070" /><stop offset="1" stopColor="#b8a030" /></radialGradient>
      </defs>

      {/* grey block */}
      <g stroke="#3c3c3c" strokeWidth="1" strokeLinejoin="round">
        <path d="M600 309L701 220L877 271L776 359Z" fill="#d0d0d0" />
        <path d="M600 309L776 359V593.5L600 543Z" fill="#d2d2d2" />
        <path d="M776 359L877 271V506L776 593.5Z" fill="#9b9b9b" />
      </g>

      {/* selected block, lighter where it is seen through the grey one */}
      <path d={body} fill="#883800" />
      <path d={body} fill="#8f5229" clipPath="url(#cube)" />
      <path d="M648 553L662.5 585L728 577Z" fill="#883800" />
      <path d="M750 471L815 464L829 496L828 523L758 502Z" fill="#8a4a22" />
      <path d="M728 577L794 569L811 626L712 638Z" fill="#8f5229" />
      <path d="M723 600L732 638L712 638Z" fill="#84441c" />
      <path d="M723 600L732 638M803 598L801 628" stroke="#6c3818" fill="none" />
      <path d="M628 570L632 519L648 553L648 576Z" fill="#8f5229" />
      <path d="M640 556L648 576V556ZM628 570L626 578L640 575Z" fill="#844018" />
      <path d="M845 533L776 593.5L617 548" fill="none" stroke="#5c341c" />
      <path d="M776 470V593.5" fill="none" stroke="#5c341c" />
      <g fill="none" stroke="#ffe8b4" strokeWidth="1.3" strokeLinejoin="round">
        <path d="M845 529L859.5 562V855L662.5 878L617 780V487" />
        <path d="M859.5 562L794 569.5L811 626L712 638L728 577L662.5 585V878" />
        <path d="M662.5 585L648 553L651 619L628 570" />
      </g>
      <g fill="none" stroke="#ecd8c0" strokeWidth="1.3" strokeLinejoin="round">
        <path d="M845 529L758 502L683 479L617 487L632 519L794 569.5" />
        <path d="M632 519L628 570L648 576M648 553L728 577M723 600L811 627" />
        <path d="M758 502L750 471L815 464L829 496L828 523M750 471L829 496" />
      </g>

      {/* move handle */}
      <path d="M744 613Q764 608 769 633" fill="none" stroke="#982c2c" strokeWidth="4" />
      <circle cx="745" cy="614" r="3" fill="#b83838" />
      <path d="M743 668L769 645" stroke="#30a838" strokeWidth="7" />
      <path d="M772 634L789 626L782 642Q775 642 772 634Z" fill="#30a838" />
      <path d="M772 645Q806 654 796 682" fill="none" stroke="#3838c0" strokeWidth="4" />
      <path d="M742 619Q780 632 791 682" fill="none" stroke="#30c840" strokeWidth="4" />
      <circle cx="746" cy="621" r="4" fill="#30c840" />
      <circle cx="790" cy="678" r="4" fill="#30c840" />
      <path d="M735 606h6v60h-6z" fill="url(#blueRod)" />
      <path d="M738 583l6 22q-6 3-12 0z" fill="url(#blueRod)" />
      <path d="M744 671L804 688" stroke="#c83c3c" strokeWidth="6" />
      <path d="M804 684L827 696L801 694Z" fill="#e04848" stroke="#c83c3c" />
      <circle cx="738" cy="671" r="8.5" fill="url(#ball)" />

      {/* world origin */}
      <path d="M738 817V792" stroke="#685878" strokeWidth="2" />
      <path d="M738 774l4 18h-7z" fill="#5878f0" />
      <path d="M739 816L753 804" stroke="#186010" strokeWidth="2" />
      <path d="M763 796L751 801L756 807Z" fill="#108010" />
      <path d="M739 817L764 824" stroke="#f01010" strokeWidth="1.5" />
      <path d="M781 829L764 821L762 827Z" fill="#ff0808" />
      <circle cx="738" cy="817" r="3" fill="#a8a0a0" />
      <g fontSize="10" fontWeight="700" textAnchor="middle">
        <text x="738" y="769" fill="#582060">Z</text>
        <text x="768" y="795" fill="#406008">Y</text>
        <text x="791" y="836" fill="#c01808">X</text>
      </g>

      {/* orientation cube */}
      <g stroke="#8898b0" strokeWidth=".8">
        <path d="M289 891L302 884L317 888L307 897Z" fill="#e4eefa" />
        <path d="M289 891L307 897V914L291 910Z" fill="#e8f2fc" />
        <path d="M307 897L317 888L316 903L307 914Z" fill="#b0c4e0" />
      </g>
      <ellipse cx="303.5" cy="889" rx="4" ry="3.5" fill="#0808e0" />
      <circle cx="298" cy="903" r="4" fill="#10a010" />
      <ellipse cx="313" cy="901" rx="3" ry="4" fill="#f01010" />
      <path d="M303.5 882V874" stroke="#0808d0" strokeWidth="1.5" />
      <path d="M303.5 866l3 12h-6z" fill="#0808e0" />
      <path d="M319 903L326 905" stroke="#e01010" strokeWidth="1.5" />
      <path d="M335 908L325 902L323 907Z" fill="#f01010" />
      <g fontSize="11" fontWeight="700" textAnchor="middle">
        <text x="303" y="862" fill="#2020e0">Z</text>
        <text x="318" y="889" fill="#208020">Y</text>
        <text x="343" y="914" fill="#f01818">X</text>
      </g>
    </SceneSvg>
  );
}

/* ---------- status bar ---------- */

function StatusBar() {
  const sky = "#70b8f8";
  return (
    <Status>
      <StatusText>ﾊﾝﾄﾞﾙをﾄﾞﾗｯｸﾞして、選択されたｵﾌﾞｼﾞｪｸﾄを移動します</StatusText>
      <StatusCell $w={151} />
      <StatusCell $w={64} $end>
        <IconButton aria-label="エラー" $w={18}>
          <Ico>
            <circle cx="8" cy="8" r="7" fill="#e83830" />
            <path d="M8 3v6M8 11v2" stroke="#fff" strokeWidth="2" />
          </Ico>
        </IconButton>
        <Caret $up $color="#fff" />
      </StatusCell>
      <StatusCell $w={100}>ﾎﾞﾃﾞｨ</StatusCell>
      <StatusCell $w={151}>1 ﾎﾞﾃﾞｨ</StatusCell>
      <StatusTools>
        <IconButton aria-label="増減" $w={14}>
          <Ico w={12} h={18} box="0 0 12 18"><path d="M2 6l4-5 4 5zM2 12l4 5 4-5z" fill="#7890a4" /></Ico>
        </IconButton>
        <IconButton aria-label="選択を戻す" $w={26}>
          <Ico w={18} h={16} box="0 0 18 16">
            <path d="M9 5q5-4 7 1-1 5-4 7" fill="none" stroke={sky} strokeWidth="2" />
            <path d="M8 1l6 2-5 4z" fill={sky} />
            <CursorPath />
          </Ico>
        </IconButton>
        <IconButton aria-label="選択" $w={20}><Ico><g transform="translate(2 0)"><CursorPath /></g></Ico></IconButton>
        <Caret $up $color="#fff" />
        <IconButton aria-label="ボックス選択" $w={22}>
          <Ico><path d="M1 2h14v12H1z" fill="none" stroke={sky} strokeWidth="2" strokeDasharray="3 2" /></Ico>
        </IconButton>
        <Caret $up $color="#fff" />
      </StatusTools>
      <StatusTools $line>
        <IconButton aria-label="スピン" $w={20}><SpinIcon color={sky} /></IconButton>
        <Caret $up $color="#fff" />
        <IconButton aria-label="パン" $w={26}><PanIcon color={sky} /></IconButton>
        <IconButton aria-label="ズーム" $w={20}>
          <Ico>
            <path d="M10 11l4 4" stroke={sky} strokeWidth="3" />
            <circle cx="7" cy="7" r="5.5" fill="#fff" stroke="#b8dcfc" strokeWidth="1.5" />
          </Ico>
        </IconButton>
        <Caret $up $color="#fff" />
        <IconButton aria-label="前のビュー" $w={24}>
          <Ico><path d="M0 13l4-7 1 2 9-4 2 3-8 5 1 2z" fill={sky} /></Ico>
        </IconButton>
        <IconButton aria-label="次のビュー" $w={24}>
          <Ico><path d="M16 3l-4 7-1-2-9 5-2-3 8-5-1-2z" fill={sky} /></Ico>
        </IconButton>
      </StatusTools>
    </Status>
  );
}

function CursorPath() {
  return <path d="M1 1v12l3-3 2 5 3-1-2-5h4z" fill="#fff" stroke="#443c38" />;
}

/* ---------- styles ---------- */

const GlobalStyle = createGlobalStyle`
  * {
    box-sizing: border-box;
  }
  body {
    margin: 0;
    background: #f7f8fd;
    color: #111;
    font-family: "Liberation Sans", "Noto Sans CJK JP", sans-serif;
    font-size: 12px;
    line-height: 16px;
  }
  button, select, input {
    font: inherit;
    color: inherit;
    margin: 0;
  }
  button {
    background: none;
    border: 0;
    padding: 0;
  }
`;

const Window = styled.div`
  display: flex;
  flex-direction: column;
  min-height: 100vh;
`;

const Svg = styled.svg`
  display: block;
  flex: none;
`;

const Flip = styled.span`
  transform: scaleX(-1);
`;

const Caret = styled.span`
  flex: none;
  width: 7px;
  height: 4px;
  background: ${(p) => p.$color || "#111"};
  clip-path: ${(p) => (p.$up ? "polygon(50% 0, 100% 100%, 0 100%)" : "polygon(0 0, 100% 0, 50% 100%)")};
  ${(p) => p.$push && "margin-left: auto;"}
`;

const TitleCaret = styled(Caret)`
  margin: 0 3px 0 1px;
`;

const IconButton = styled.button`
  display: flex;
  flex: none;
  align-items: center;
  justify-content: center;
  width: ${(p) => p.$w || 16}px;
  height: 22px;
  ${(p) => p.$active && css`
    background: #c6c6c6;
    border: 1px solid #b4b4b4;
  `}
`;

const TitleRow = styled.header`
  display: grid;
  grid-template-columns: 1fr auto 1fr;
  align-items: center;
  height: 29px;
  background: ${blue};
  color: #fff;
`;

const QuickTools = styled.div`
  display: flex;
  align-items: center;
  align-self: start;
  height: 25px;
  padding-left: 2px;
`;

const TitleSep = styled.span`
  width: 1px;
  height: 16px;
  margin: 0 4px 0 5px;
  background: #a8b8c8;
`;

const MoreButton = styled(IconButton)`
  margin-left: 5px;
`;

const Title = styled.h1`
  align-self: start;
  margin: 0;
  padding-top: 4px;
  padding-left: 100px;
  font-size: 12px;
  font-weight: 400;
`;

const WindowButtons = styled.div`
  display: flex;
  justify-content: flex-end;
  padding-right: 3px;
`;

const TabRow = styled.nav`
  display: flex;
  align-items: flex-end;
  height: 24px;
  background: ${blue};
`;

const Tab = styled.button`
  width: ${(p) => p.$w}px;
  height: 24px;
  color: ${(p) => (p.$active ? blue : "#fff")};
  background: ${(p) => (p.$active ? "#f0f0f0" : "none")};
  font-size: ${(p) => (p.$active ? 12 : 13)}px;
  ${(p) => p.$active && "margin-left: 7px;"}
`;

const TabSpacer = styled.span`
  flex: 1;
`;

const RibbonRow = styled.div`
  display: flex;
  height: 92px;
  padding: 3px 0 4px;
  background: #f0f0f0;
  border-bottom: 2px solid ${blue};
`;

const GroupBox = styled.section`
  display: flex;
  flex: none;
  flex-direction: column;
  width: ${(p) => p.$w}px;
  padding-top: 2px;
  border-right: 1px solid #c8c8c8;
`;

const GroupTools = styled.div`
  display: flex;
  height: 66px;
`;

const GroupLabel = styled.div`
  line-height: 16px;
  text-align: center;
  white-space: nowrap;
`;

const BigButton = styled.button`
  display: flex;
  flex: none;
  flex-direction: column;
  align-items: center;
  width: ${(p) => p.$w}px;
  height: 67px;
  margin-left: ${(p) => p.$left || 0}px;
  padding-top: 3px;
  line-height: 13px;
  white-space: nowrap;
  text-align: center;
  ${(p) => p.$active && "background: #c6c6c6; box-shadow: inset 0 0 0 1px #b4b4b4;"}
  & > ${Caret} {
    margin-top: 7px;
  }
  & > svg {
    margin-bottom: 3px;
  }
`;

const IconColumn = styled.div`
  display: flex;
  flex: none;
  flex-direction: column;
  width: ${(p) => (p.$w ? `${p.$w}px` : "auto")};
  margin-left: ${(p) => p.$left || 4}px;
`;

const SmallButton = styled.button`
  display: flex;
  align-items: center;
  flex: 1;
  gap: 3px;
  height: 22px;
  max-height: 22px;
  padding-right: ${(p) => p.$pad || 4}px;
  white-space: nowrap;
  &:disabled {
    color: #999;
  }
`;

const CubeButton = styled(SmallButton)`
  flex: none;
  gap: 7px;
  padding-right: 6px;
`;

const ButtonPair = styled.div`
  display: flex;
`;

const SketchGrid = styled.div`
  display: grid;
  grid-template-columns: repeat(7, 25px);
  justify-items: center;
  margin-left: 4px;
`;

const InsertGrid = styled.div`
  display: grid;
  grid-template-columns: 29px 29px;
  grid-auto-rows: 22px;
  justify-items: center;
  margin: 0 2px;
`;

const Centered = styled.div`
  display: flex;
  align-items: center;
  margin-left: ${(p) => p.$left}px;
`;

const Tile = styled.span`
  display: flex;
  justify-content: center;
  width: 32px;
  height: 32px;
  padding-top: 3px;
  border: 1px solid #c4c4c4;
  border-radius: 3px;
  background: linear-gradient(#f2f2f2 76%, #d4d4d4 76%);
`;

const TileText = styled.span`
  margin-top: 7px;
`;

const Body = styled.div`
  display: flex;
  flex: 1;
`;

const Side = styled.aside`
  display: flex;
  flex: none;
  flex-direction: column;
  width: 238px;
  padding: 1px 0 3px 2px;
  background: #fff;
`;

const PaneHead = styled.div`
  display: flex;
  flex: none;
  align-items: center;
  justify-content: space-between;
  height: 19px;
  padding: 0 6px 0 5px;
  background: ${(p) => (p.$active ? "#a8bacf" : "#f7f8fc")};
`;

const Tree = styled.div`
  min-height: 228px;
  padding-top: 4px;
`;

const TreeRow = styled.div`
  display: flex;
  align-items: center;
  gap: 3px;
  height: 16px;
  padding-left: ${(p) => (p.$indent ? 42 : p.$twisted ? 27 : 8)}px;
`;

const Twist = styled.button`
  width: 12px;
  padding-left: 1px;
`;

const Check = styled.input`
  appearance: none;
  flex: none;
  width: 13px;
  height: 13px;
  border: 1px solid #999;
  background: #fff;
  &:checked {
    background: ${(p) => (p.$filled ? blue : "#fff")};
    border-color: ${(p) => (p.$filled ? blue : "#999")};
  }
  &:checked::before {
    content: "";
    display: block;
    width: 8px;
    height: 4px;
    margin: 2px 0 0 2px;
    border-left: ${(p) => (p.$filled ? 2 : 1)}px solid;
    border-bottom: ${(p) => (p.$filled ? 2 : 1)}px solid;
    border-color: ${(p) => (p.$filled ? "#fff" : p.$tick || "#333")};
    transform: rotate(-45deg);
  }
`;

const TreeLabel = styled.label`
  position: relative;
  margin-left: 1px;
  padding: 0 2px;
  font-weight: ${(p) => (p.$bold ? 700 : 400)};
  font-style: ${(p) => (p.$italic ? "italic" : "normal")};
  font-family: ${(p) => (p.$italic ? "inherit" : 'Roboto, "Liberation Sans", sans-serif')};
  background: ${(p) => (p.$selected ? "#ffb010" : "none")};
`;

const Pointer = styled.span`
  position: absolute;
  top: 5px;
  left: 25px;
`;

const PropertyBox = styled.div`
  min-height: 199px;
  margin-top: 1px;
  border: 1px solid #a0a0a0;
`;

const PropertyTable = styled.table`
  width: 100%;
  table-layout: fixed;
  border-collapse: collapse;
  td, th {
    height: 16px;
    padding: 0;
    font-family: Roboto, "Noto Sans CJK JP", sans-serif;
    line-height: 15px;
    overflow: hidden;
    white-space: nowrap;
    font-feature-settings: "palt";
  }
`;

const Gutter = styled.td`
  background: #e2e2e6;
  svg {
    margin-left: 4px;
  }
`;

const SectionCell = styled.th`
  background: #e2e2e6;
  font-size: 11px;
  text-align: left;
  && {
    padding-left: 4px;
  }
`;

const PropCell = styled.td`
  border-right: 1px solid #dcdce0;
  border-bottom: 1px solid #dcdce0;
  color: ${(p) => (p.$dim ? "#777" : "#111")};
  font-size: 11px;
  && {
    padding-left: ${(p) => (p.$indent ? 24 : 3)}px;
  }
  &:last-child {
    border-right: 0;
  }
`;

const Swatch = styled.span`
  display: inline-block;
  width: 20px;
  height: 12px;
  margin: 0 8px 0 -2px;
  border: 1px solid #111;
  background: #ff8000;
  vertical-align: -2px;
`;

const PaneTabs = styled.div`
  display: flex;
  flex: none;
  height: 22px;
  padding-left: 4px;
  background: #f7f8fc;
`;

const PaneTab = styled.button`
  padding: 0 6px;
  ${(p) => p.$active && css`
    padding: 0 5px;
    color: ${blue};
    background: #f0f2f4;
    border-left: 1px solid ${blue};
    border-right: 1px solid ${blue};
  `}
`;

const Options = styled.div`
  display: flex;
  flex: 1;
  flex-direction: column;
  padding-top: 5px;
`;

const SectionHead = styled.div`
  display: flex;
  align-items: center;
  gap: 5px;
  height: 24px;
  margin-top: 3px;
  padding-left: 5px;
  background: #f7f8fc;
  font-size: 11px;
`;

const OptionIcons = styled.div`
  display: flex;
  padding: 7px 0 2px 5px;
`;

const OptionGap = styled.span`
  width: 10px;
`;

const OptionRow = styled.div`
  display: flex;
  align-items: center;
  gap: 6px;
  height: 20px;
  padding-left: 10px;
  font-size: 11px;
`;

const MemoryRow = styled.div`
  display: flex;
  align-items: center;
  gap: 7px;
  height: 24px;
  padding-left: 10px;
  color: #777;
  font-size: 10px;
`;

const Select = styled.select`
  appearance: none;
  border: 0;
  padding: 0;
  background: none;
  color: #222;
`;

const Work = styled.main`
  display: flex;
  flex: 1;
  flex-direction: column;
  min-width: 0;
  padding: 4px 0 0 3px;
`;

const Viewport = styled.section`
  position: relative;
  flex: 1;
  margin: 0 3px 3px;
  padding: 8px 10px;
  border: 1px solid #b0aa98;
  background: #fff;
`;

const SceneSvg = styled.svg`
  position: absolute;
  top: 0;
  left: 0;
  width: 100%;
  height: 100%;
`;

const Hint = styled.p`
  position: relative;
  margin: 0;
  color: #555;
  font-size: 13px;
  white-space: nowrap;
`;

const Guides = styled.div`
  position: relative;
  display: flex;
  align-items: flex-start;
  gap: 16px;
  padding: 7px 5px;
`;

const GuideSide = styled.div`
  display: grid;
  gap: 7px;
  padding-top: 2px;
`;

const GuideGrid = styled.div`
  display: grid;
  grid-template-columns: repeat(4, 32px);
  column-gap: 31px;
  row-gap: 8px;
`;

const GuideButton = styled.button`
  display: flex;
  align-items: center;
  justify-content: center;
  width: ${(p) => p.$size}px;
  height: ${(p) => p.$size}px;
  border: 1px solid #777;
  border-radius: 5px;
  background: #fff;
  &:disabled {
    opacity: 0.25;
  }
`;

const ScaleBar = styled.div`
  position: absolute;
  right: 13px;
  bottom: 10px;
  width: 67px;
  border-top: 2px solid #5050e0;
  color: #3c3cc8;
  font-family: Roboto, sans-serif;
  font-size: 11px;
  text-align: center;
`;

const DocBar = styled.div`
  display: flex;
  justify-content: space-between;
  height: 25px;
  padding: 0 1px 3px 3px;
  border-top: 1px solid #888;
  border-left: 1px solid #888;
`;

const DocTab = styled.button`
  display: flex;
  align-items: center;
  gap: 4px;
  padding: 0 3px;
  border: 1px solid ${blue};
  border-top: 0;
  color: ${blue};
  font-family: Roboto, sans-serif;
`;

const DocNav = styled.div`
  display: flex;
`;

const QuickGuide = styled.aside`
  flex: none;
  width: 29px;
  background: #f0f0f0;
`;

const GuideTab = styled.button`
  margin: 3px 0 0 5px;
  padding: 5px 0;
  border-right: 5px solid #b8b8bc;
  background: #f8f8fb;
  writing-mode: vertical-rl;
  text-orientation: sideways;
`;

const Status = styled.footer`
  display: flex;
  align-items: center;
  height: 32px;
  padding-right: 21px;
  background: ${blue};
  color: #fff;
  font-size: 10px;
`;

const StatusText = styled.span`
  flex: 1;
  padding-left: 8px;
  white-space: nowrap;
`;

const StatusCell = styled.span`
  display: flex;
  align-items: center;
  justify-content: ${(p) => (p.$end ? "flex-end" : "center")};
  gap: 4px;
  width: ${(p) => p.$w}px;
  height: 24px;
  padding-right: ${(p) => (p.$end ? 5 : 0)}px;
  border-left: 1px solid #7890a8;
`;

const StatusTools = styled.span`
  display: flex;
  align-items: center;
  gap: 2px;
  height: 24px;
  ${(p) => p.$line && css`
    margin-left: 4px;
    padding-left: 2px;
    border-left: 1px solid #7890a8;
  `}
`;
